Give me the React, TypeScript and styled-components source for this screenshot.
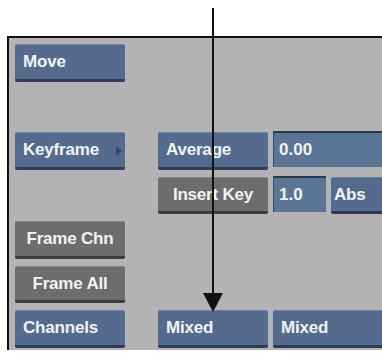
import React from 'react';
import styled, { createGlobalStyle } from 'styled-components';

const GlobalStyle = createGlobalStyle`
  html, body {
    margin: 0;
    padding: 0;
    background: #ffffff;
    overflow: hidden;
  }
  body {
    font-family: 'Liberation Sans', Arial, sans-serif;
  }
`;

const Page = styled.div`
  position: relative;
  width: 382px;
  height: 353px;
  padding-top: 36px;
  box-sizing: border-box;
`;

// columns: left buttons | empty gutter | middle buttons | small field | small button
const Panel = styled.div`
  margin-left: 7px;
  height: 314px;
  box-sizing: border-box;
  background: #b3b3b3;
  border-top: 2px solid #111;
  border-left: 2px solid #111;
  padding: 6px 0 0 6px;
  display: grid;
  grid-template-columns: 110px 23px 110px 53px 60px;
  grid-template-rows: 38px 36px 38px 37px 38px 37px 38px;
  column-gap: 5px;
  row-gap: 7px;
`;

const Button = styled.div<{ $tone?: 'blue' | 'gray'; $align?: 'left' | 'center'; $pad?: number; $col: string; $row: number }>`
  grid-column: ${p => p.$col};
  grid-row: ${p => p.$row};
  position: relative;
  display: flex;
  align-items: center;
  justify-content: ${p => (p.$align === 'center' ? 'center' : 'flex-start')};
  padding: 0 0 0 ${p => (p.$align === 'center' ? 0 : p.$pad ?? 8)}px;
  box-sizing: border-box;
  border-radius: 2px;
  background: ${p => (p.$tone === 'gray' ? '#6d6d6d' : '#546b8e')};
  border-top: 1px solid ${p => (p.$tone === 'gray' ? '#858585' : '#6880a3')};
  border-bottom: 3px solid ${p => (p.$tone === 'gray' ? '#3d3d3d' : '#2f3d56')};
  color: #f3f3f3;
  font-size: 17px;
  font-weight: 700;
  letter-spacing: -0.2px;
  white-space: nowrap;
  overflow: hidden;
`;

const Field = styled.div<{ $col: string; $row: number }>`
  grid-column: ${p => p.$col};
  grid-row: ${p => p.$row};
  align-self: start;
  height: 36px;
  margin-top: -1px;
  display: flex;
  align-items: center;
  padding-left: 5px;
  box-sizing: border-box;
  background: #5b7597;
  border-top: 2px solid #2d3a4e;
  border-left: 1px solid #3b4b63;
  color: #f3f3f3;
  font-size: 17px;
  font-weight: 700;
  white-space: nowrap;
`;

const Caret = styled.span`
  position: absolute;
  right: 3px;
  top: 13px;
  width: 0;
  height: 0;
  border-top: 5px solid transparent;
  border-bottom: 5px solid transparent;
  border-left: 6px solid #34476a;
`;

const Pointer = styled.svg`
  position: absolute;
  left: 0;
  top: 0;
  pointer-events: none;
`;

export default function App() {
  return (
    <>
      <GlobalStyle />
      <Page>
        <Panel>
          <Button $col="1" $row={1}>Move</Button>

          <Button $col="1" $row={3}>
            Keyframe
            <Caret />
          </Button>
          <Button $col="3" $row={3}>Average</Button>
          <Field $col="4 / span 2" $row={3}>0.00</Field>

          <Button $col="3" $row={4} $tone="gray" $align="center">Insert Key</Button>
          <Field $col="4" $row={4}>1.0</Field>
          <Button $col="5" $row={4} $pad={3}>Abs</Button>

          <Button $col="1" $row={5} $tone="gray" $align="center">Frame Chn</Button>
          <Button $col="1" $row={6} $tone="gray" $align="center">Frame All</Button>

          <Button $col="1" $row={7}>Channels</Button>
          <Button $col="3" $row={7}>Mixed</Button>
          <Button $col="4 / span 2" $row={7}>Mixed</Button>
        </Panel>

        <Pointer width="382" height="353" viewBox="0 0 382 353">
          <line x1="213" y1="8" x2="213" y2="296" stroke="#111" strokeWidth="2" />
          <polygon points="203,293 223,293 213,312" fill="#111" />
        </Pointer>
      </Page>
    </>
  );
}
